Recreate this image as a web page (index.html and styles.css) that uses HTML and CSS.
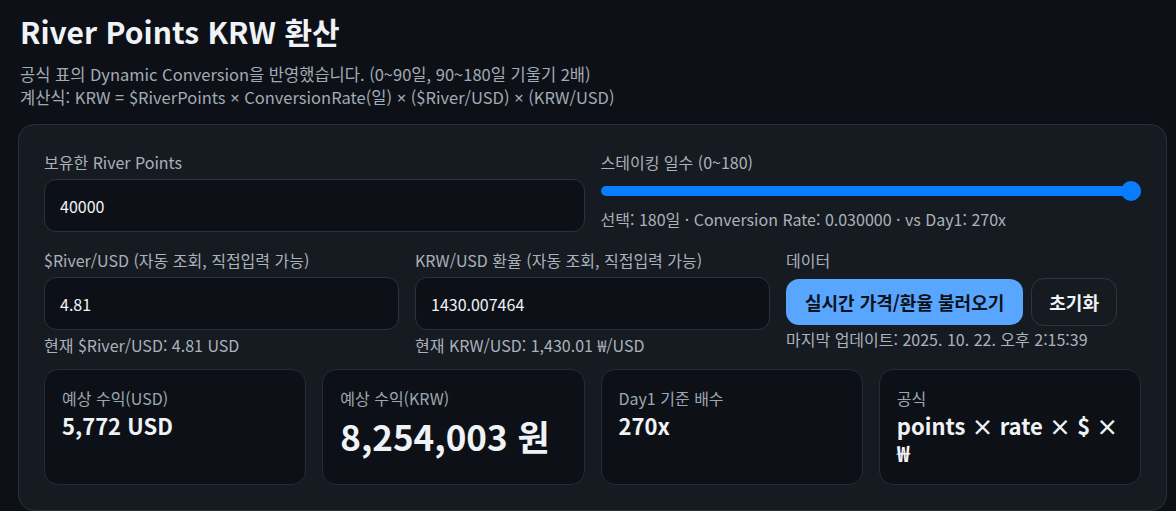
FILE: index.html
```html
<!DOCTYPE html>
<html lang="ko">
<head>
<meta charset="utf-8">
<title>River Points KRW 환산</title>
<link rel="stylesheet" href="styles.css">
</head>
<body>
<div class="wrap">
  <h1 class="title">River Points KRW 환산</h1>
  <p class="sub">공식 표의 Dynamic Conversion을 반영했습니다. (0~90일, 90~180일 기울기 2배)<br>계산식: KRW = $RiverPoints <span class="x">×</span> ConversionRate(일) <span class="x">×</span> ($River/USD) <span class="x">×</span> (KRW/USD)</p>

  <section class="panel">
    <div class="row row2">
      <div class="field">
        <label class="label">보유한 River Points</label>
        <input class="input" type="text" value="40000">
      </div>
      <div class="field">
        <label class="label">스테이킹 일수 (0~180)</label>
        <input class="range" type="range" min="0" max="180" value="180">
        <div class="hint slider-hint">선택: 180일 · Conversion Rate: 0.030000 · vs Day1: 270x</div>
      </div>
    </div>

    <div class="row row3">
      <div class="field">
        <label class="label">$River/USD (자동 조회, 직접입력 가능)</label>
        <input class="input" type="text" value="4.81">
        <div class="hint">현재 $River/USD: 4.81 USD</div>
      </div>
      <div class="field">
        <label class="label">KRW/USD 환율 (자동 조회, 직접입력 가능)</label>
        <input class="input" type="text" value="1430.007464">
        <div class="hint">현재 KRW/USD: 1,430.01 ₩/USD</div>
      </div>
      <div class="field">
        <label class="label">데이터</label>
        <div class="buttons">
          <button class="btn primary">실시간 가격/환율 불러오기</button>
          <button class="btn ghost">초기화</button>
        </div>
        <div class="hint updated">마지막 업데이트: 2025. 10. 22. 오후 2:15:39</div>
      </div>
    </div>

    <div class="row row4">
      <div class="stat">
        <div class="stat-label">예상 수익(USD)</div>
        <div class="stat-value">5,772 USD</div>
      </div>
      <div class="stat">
        <div class="stat-label">예상 수익(KRW)</div>
        <div class="stat-value big">8,254,003 원</div>
      </div>
      <div class="stat">
        <div class="stat-label">Day1 기준 배수</div>
        <div class="stat-value">270x</div>
      </div>
      <div class="stat">
        <div class="stat-label">공식</div>
        <div class="stat-value formula">points × rate × $ × ₩</div>
      </div>
    </div>
  </section>
</div>
</body>
</html>
```

FILE: styles.css
```css
html, body {
  margin: 0;
  padding: 0;
  background: #0d1117;
}
body {
  color: #e6edf3;
  font-family: "Noto Sans CJK KR", "Noto Sans", sans-serif;
}
.wrap {
  width: 1149px;
  padding-left: 18px;
  box-sizing: content-box;
}
.x {
  font-family: "Noto Sans", "DejaVu Sans", sans-serif;
}
.title {
  margin: 12px 0 0 2px;
  font-size: 30px;
  line-height: 38px;
  font-weight: 700;
  color: #f0f3f6;
}
.sub {
  margin: 13px 0 0 2px;
  font-size: 16.5px;
  line-height: 23px;
  color: #a3abb5;
}
.panel {
  margin-top: 15px;
  background: #161b22;
  border: 1px solid #2a3038;
  border-radius: 16px;
  padding: 26px 25px 25px 25px;
  display: flex;
  flex-direction: column;
  gap: 17px;
}
.row {
  display: grid;
  gap: 16px;
}
.row2 { grid-template-columns: 1fr 1fr; }
.row3 { grid-template-columns: 1fr 1fr 1fr; }
.row4 { grid-template-columns: repeat(4, 1fr); margin-top: -4px; }
.field {
  display: flex;
  flex-direction: column;
  min-width: 0;
}
.label {
  font-size: 16px;
  line-height: 22px;
  color: #aab2bc;
  margin-bottom: 6px;
}
.input {
  height: 53px;
  box-sizing: border-box;
  background: #0d1117;
  border: 1px solid #2c323b;
  border-radius: 12px;
  padding: 0 15px;
  font-family: inherit;
  font-size: 16px;
  color: #f0f3f6;
  outline: none;
}
.hint {
  font-size: 16px;
  line-height: 22px;
  color: #aab2bc;
  margin-top: 4px;
}
.slider-hint { margin-top: 7px; }
.updated { margin-top: 2px; }
.range {
  -webkit-appearance: none;
  appearance: none;
  width: 100%;
  height: 20px;
  margin: 2px 0 0;
  background: transparent;
}
.range::-webkit-slider-runnable-track {
  height: 10px;
  border-radius: 5px;
  background: #0a7cff;
}
.range::-webkit-slider-thumb {
  -webkit-appearance: none;
  appearance: none;
  width: 20px;
  height: 20px;
  border-radius: 50%;
  background: #0a7cff;
  margin-top: -5px;
  border: none;
}
.buttons {
  display: flex;
  gap: 8px;
  align-items: center;
  margin-top: 1px;
}
.btn {
  font-family: inherit;
  font-size: 18px;
  font-weight: 700;
  border-radius: 13px;
  cursor: pointer;
}
.btn.primary {
  height: 46px;
  padding: 0 19px;
  background: #58a6ff;
  border: 0;
  color: #0d1117;
}
.btn.ghost {
  height: 48px;
  padding: 0 17px;
  background: #161b22;
  border: 1px solid #30363d;
  color: #f0f3f6;
}
.stat {
  background: #0d1117;
  border: 1px solid #262c35;
  border-radius: 14px;
  padding: 16px 17px;
  min-height: 116px;
  box-sizing: border-box;
}
.stat-label {
  font-size: 16px;
  line-height: 24px;
  color: #9ea7b1;
  margin-bottom: 2px;
}
.stat-value {
  font-size: 22px;
  line-height: 26px;
  font-weight: 700;
  color: #f0f3f6;
}
.stat-value.formula {
  line-height: 27px;
}
.stat-value.big {
  font-size: 35px;
  line-height: 42px;
  margin-top: 5px;
}
```
